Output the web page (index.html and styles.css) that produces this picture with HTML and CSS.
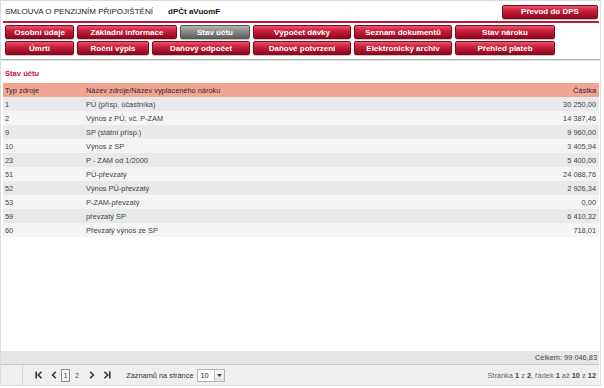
FILE: index.html
```html
<!DOCTYPE html>
<html lang="cs">
<head>
<meta charset="utf-8">
<title>Stav účtu</title>
<link rel="stylesheet" href="styles.css">
</head>
<body>
<div class="page">
  <div class="topbar">
    <span class="contract">SMLOUVA O PENZIJNÍM PŘIPOJIŠTĚNÍ</span>
    <span class="code">dPČt aVuomF</span>
    <span class="btn btn-dps">Převod do DPS</span>
  </div>
  <div class="redline"></div>
  <div class="nav">
    <div class="nav-row">
      <span class="btn w69">Osobní údaje</span>
      <span class="btn w100">Základní informace</span>
      <span class="btn btn-active w70">Stav účtu</span>
      <span class="btn w98">Výpočet dávky</span>
      <span class="btn w98">Seznam dokumentů</span>
      <span class="btn w100">Stav nároku</span>
    </div>
    <div class="nav-row">
      <span class="btn w69">Úmrtí</span>
      <span class="btn w72">Roční výpis</span>
      <span class="btn w98">Daňový odpočet</span>
      <span class="btn w98">Daňové potvrzení</span>
      <span class="btn w98">Elektronický archiv</span>
      <span class="btn w100">Přehled plateb</span>
    </div>
  </div>
  <div class="sep"></div>
  <h2 class="section-title">Stav účtu</h2>
  <table class="grid">
    <thead>
      <tr><th class="c-type">Typ zdroje</th><th class="c-name">Název zdroje/Název vyplaceného nároku</th><th class="c-amt">Částka</th></tr>
    </thead>
    <tbody>
      <tr><td>1</td><td>PÚ (přísp. účastníka)</td><td class="c-amt">30 250,00</td></tr>
      <tr><td>2</td><td>Výnos z PÚ, vč. P-ZAM</td><td class="c-amt">14 387,46</td></tr>
      <tr><td>9</td><td>SP (státní přísp.)</td><td class="c-amt">9 960,00</td></tr>
      <tr><td>10</td><td>Výnos z SP</td><td class="c-amt">3 405,94</td></tr>
      <tr><td>23</td><td>P - ZAM od 1/2000</td><td class="c-amt">5 400,00</td></tr>
      <tr><td>51</td><td>PÚ-převzatý</td><td class="c-amt">24 088,76</td></tr>
      <tr><td>52</td><td>Výnos PÚ-převzatý</td><td class="c-amt">2 926,34</td></tr>
      <tr><td>53</td><td>P-ZAM-převzatý</td><td class="c-amt">0,00</td></tr>
      <tr><td>59</td><td>převzatý SP</td><td class="c-amt">6 410,32</td></tr>
      <tr><td>60</td><td>Převzatý výnos ze SP</td><td class="c-amt">718,01</td></tr>
    </tbody>
  </table>
  <div class="spacer"></div>
  <div class="total">Celkem: 99 046,83</div>
  <div class="pager">
    <div class="pager-left">
      <span class="pg-icon"><svg width="8" height="8" viewBox="0 0 8 8"><path d="M1.2 0.5v7" stroke="#333" stroke-width="1.6" fill="none"/><path d="M6.5 0.8L3.2 4l3.3 3.2" stroke="#333" stroke-width="1.6" fill="none"/></svg></span>
      <span class="pg-icon prev"><svg width="6" height="8" viewBox="0 0 6 8"><path d="M4.8 0.8L1.6 4l3.2 3.2" stroke="#333" stroke-width="1.6" fill="none"/></svg></span>
      <span class="pg-num current">1</span>
      <span class="pg-num">2</span>
      <span class="pg-icon next"><svg width="6" height="8" viewBox="0 0 6 8"><path d="M1.2 0.8L4.4 4L1.2 7.2" stroke="#333" stroke-width="1.6" fill="none"/></svg></span>
      <span class="pg-icon last"><svg width="8" height="8" viewBox="0 0 8 8"><path d="M1.5 0.8L4.8 4L1.5 7.2" stroke="#333" stroke-width="1.6" fill="none"/><path d="M6.8 0.5v7" stroke="#333" stroke-width="1.6" fill="none"/></svg></span>
      <span class="per-page">Záznamů na stránce</span>
      <span class="select"><span class="select-val">10</span><span class="select-btn"><svg width="5" height="3" viewBox="0 0 5 3"><path d="M0 0h5L2.5 3z" fill="#444"/></svg></span></span>
    </div>
    <div class="pager-info">Stránka <b>1</b> z <b>2</b>, řádek <b>1</b> až <b>10</b> z <b>12</b></div>
  </div>
</div>
</body>
</html>
```

FILE: styles.css
```css
* { box-sizing: border-box; }
html, body { margin: 0; padding: 0; background: #fff; }
body { font-family: "Liberation Sans", Arial, sans-serif; color: #333; }

.page {
  width: 601px;
  height: 386px;
  border: 1px solid #dadada;
  display: flex;
  flex-direction: column;
}

.topbar {
  height: 20px;
  display: flex;
  align-items: center;
  padding: 0 2px 0 4px;
}
.contract { font-size: 8px; color: #222; width: 163px; }
.code { font-size: 8px; font-weight: bold; color: #111; }
.btn-dps { margin-left: auto; width: 96px; height: 16px; margin-top: 1px; }

.redline { height: 2px; background: #c3163a; margin: 0 1px 0 2px; }

.btn {
  display: flex;
  align-items: center;
  justify-content: center;
  height: 14px;
  font-size: 8px;
  font-weight: bold;
  color: #fff;
  border: 1px solid #7d0b1e;
  border-radius: 2px;
  background: linear-gradient(to bottom, #e9546b 0%, #cf2440 35%, #b5142f 65%, #8c0b20 100%);
  white-space: nowrap;
  box-shadow: 0 1px 1px rgba(0,0,0,0.25);
}
.btn-active {
  border-color: #555;
  background: linear-gradient(to bottom, #b4b4b4 0%, #8e8e8e 40%, #7a7a7a 65%, #5f5f5f 100%);
}

.nav { padding: 2px 0 0 4px; display: flex; flex-direction: column; gap: 2px; }
.nav-row { display: flex; gap: 3px; }
.w69 { width: 69px; }
.w70 { width: 70px; }
.w72 { width: 72px; }
.w98 { width: 98px; }
.w100 { width: 100px; }

.sep { height: 2px; margin-top: 4px; border-top: 1px solid #b3b3b3; border-bottom: 1px solid #e2e2e2; }

.section-title {
  margin: 8px 0 0 4px;
  font-size: 7.6px;
  font-weight: bold;
  color: #c0163e;
  height: 14px;
  line-height: 9px;
}

.grid {
  margin: 0 1px 0 2px;
  border-collapse: collapse;
  font-size: 7.4px;
  color: #444;
}
.grid th {
  background: #f0a595;
  font-weight: normal;
  color: #2b2b2b;
  text-align: left;
  height: 14px;
  padding: 0 3px 0 2px;
}
.grid td { height: 14px; padding: 0 3px 0 2px; }
.grid tbody tr:nth-child(odd) { background: #e8e9ea; }
.grid tbody tr:nth-child(even) { background: #f4f4f4; }
.c-type { width: 81px; }
.c-name { width: 400px; }
.grid .c-amt { text-align: right; }
.grid th.c-amt { text-align: right; }

.spacer { flex: 1; }

.total {
  margin: 0 1px 0 0;
  height: 14px;
  background: #e6e6e6;
  border-bottom: 1px solid #c9c9c9;
  font-size: 7.4px;
  color: #444;
  text-align: right;
  padding: 0 2px 0 0;
  line-height: 13px;
}

.pager {
  margin: 0 1px 0 0;
  height: 20px;
  background: #efefef;
  display: flex;
  align-items: center;
  justify-content: space-between;
  font-size: 7.4px;
  color: #444;
  padding-right: 3px;
}
.pager-left {
  display: flex;
  align-items: center;
  height: 100%;
  margin-left: 21px;
  border-left: 1px solid #d2d2d2;
  padding-left: 11px;
}
.pg-icon { display: flex; align-items: center; width: 10px; justify-content: center; }
.pg-icon.prev { margin-left: 6px; width: 8px; }
.pg-num { font-size: 7.4px; color: #555; padding: 0 2px; }
.pg-num.current { border: 1px solid #8a8a8a; height: 13px; width: 9px; line-height: 11px; text-align: center; padding: 0; margin-left: 3px; background: #f7f7f7; }
.pg-num + .pg-num { margin-left: 3px; }
.pg-icon.next { margin-left: 6px; }
.pg-icon.last { margin-left: 5px; }
.per-page { margin-left: 14px; color: #333; }
.select {
  margin-left: 3px;
  display: flex;
  height: 13px;
  width: 28px;
  border: 1px solid #b5b5b5;
  background: #fff;
}
.select-val { flex: 1; padding-left: 3px; line-height: 11px; color: #222; }
.select-btn {
  width: 10px;
  border-left: 1px solid #c4c4c4;
  background: linear-gradient(#fafafa, #e2e2e2);
  display: flex;
  align-items: center;
  justify-content: center;
}
.pager-info { color: #666; }
.pager-info b { color: #444; }
```
